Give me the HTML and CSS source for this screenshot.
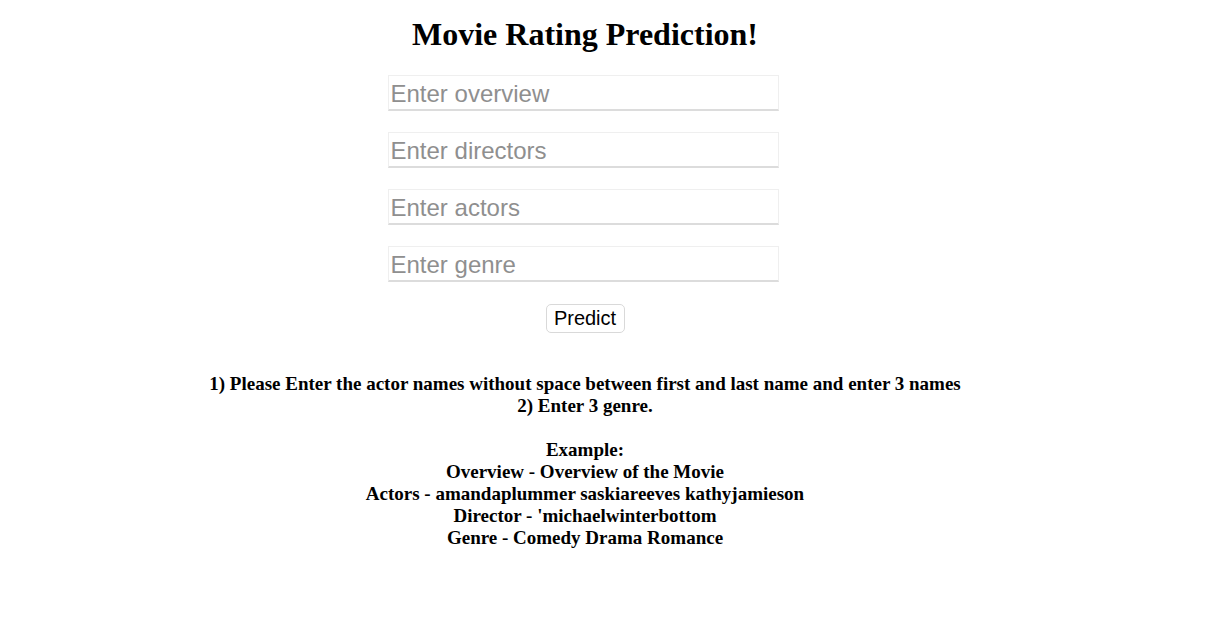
FILE: index.html
```html
<!DOCTYPE html>
<html>
<head>
<meta charset="utf-8">
<title>Movie Rating Prediction</title>
<link rel="stylesheet" href="styles.css">
</head>
<body>
<div class="page">
  <h1 class="title">Movie Rating Prediction!</h1>
  <form class="form">
    <input class="field" type="text" placeholder="Enter overview">
    <input class="field" type="text" placeholder="Enter directors">
    <input class="field" type="text" placeholder="Enter actors">
    <input class="field" type="text" placeholder="Enter genre">
    <button class="btn" type="button">Predict</button>
  </form>
  <div class="notes">
    <p>1) Please Enter the actor names without space between first and last name and enter 3 names<br>2) Enter 3 genre.</p>
    <p>Example:<br>Overview - Overview of the Movie<br>Actors - amandaplummer saskiareeves kathyjamieson<br>Director - 'michaelwinterbottom<br>Genre - Comedy Drama Romance</p>
  </div>
</div>
</body>
</html>
```
FILE: styles.css
```css
html, body {
  margin: 0;
  padding: 0;
  background: #ffffff;
}
body {
  padding: 0 8px;
  font-family: "Liberation Serif", "Times New Roman", serif;
  color: #000;
}
.page {
  width: 1154px;
  display: flex;
  flex-direction: column;
  align-items: center;
}
.title {
  font-size: 32px;
  font-weight: bold;
  margin: 16px 0 0 0;
  line-height: 37px;
}
.form {
  display: flex;
  flex-direction: column;
  align-items: center;
  gap: 21px;
  margin-top: 22px;
}
.field {
  box-sizing: border-box;
  width: 391px;
  height: 36px;
  margin-right: 4px;
  border: 1px solid #efefef;
  border-bottom: 2px solid #dcdcdc;
  padding: 2px 2px 0 2px;
  font-family: "Liberation Sans", Arial, sans-serif;
  font-size: 24px;
  color: #000;
  background: #fff;
  outline: none;
}
.field::placeholder {
  color: #8f8f8f;
}
.btn {
  box-sizing: border-box;
  height: 29px;
  width: 79px;
  margin-top: 1px;
  border: 1px solid #d9d9d9;
  border-radius: 5px;
  background: #fff;
  font-family: "Liberation Sans", Arial, sans-serif;
  font-size: 20px;
  color: #000;
  padding: 0;
}
.notes {
  margin-top: 40px;
  text-align: center;
  font-weight: bold;
  font-size: 19px;
  line-height: 22px;
}
.notes p {
  margin: 0 0 22px 0;
}
```
